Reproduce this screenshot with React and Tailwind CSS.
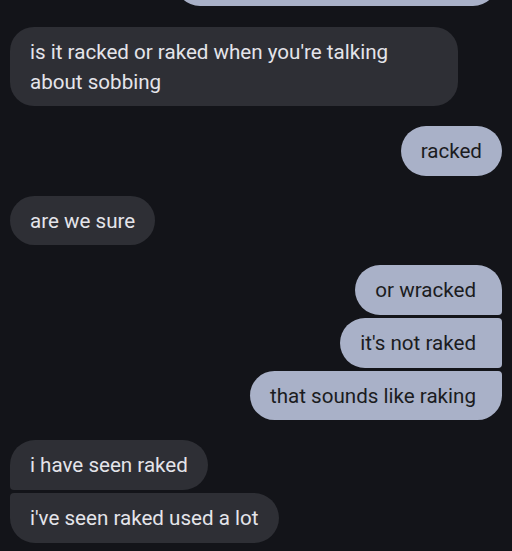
export default function App() {
  const recv = "bg-[#2e2f35] text-[#e4e4ea]";
  const sent = "bg-[#a9b1c8] text-[#1b1c21]";
  const base = "px-5 py-[10px] text-[20.6px] leading-[30px]";
  return (
    <div
      className="w-[512px] h-[551px] bg-[#131419] overflow-hidden flex flex-col"
      style={{ fontFamily: "Roboto, 'Noto Sans', sans-serif" }}
    >
      <div className="flex justify-end pr-[14px] -mt-[44px]">
        <div className={`${sent} ${base} w-[323px] h-[50px] rounded-[25px]`}></div>
      </div>
      <div className="flex flex-col px-[10px] mt-[21px]">
        <div className="flex justify-start">
          <div className={`${recv} ${base} w-[448px] rounded-[24px] pb-[9px]`}>
            is it racked or raked when you're talking
            <br />
            about sobbing
          </div>
        </div>
        <div className="flex justify-end mt-[20px]">
          <div className={`${sent} ${base} rounded-[25px]`}>racked</div>
        </div>
        <div className="flex justify-start mt-[20px]">
          <div className={`${recv} ${base} rounded-[25px] h-[49px] leading-[29px]`}>are we sure</div>
        </div>
        <div className="flex flex-col items-end mt-[20px] gap-[3px]">
          <div className={`${sent} ${base} pr-[26px] rounded-[25px] rounded-br-[4px]`}>or wracked</div>
          <div className={`${sent} ${base} pr-[26px] rounded-l-[25px] rounded-r-[4px]`}>it's not raked</div>
          <div className={`${sent} ${base} pr-[26px] rounded-[25px] rounded-tr-[4px] h-[49px] leading-[29px]`}>that sounds like raking</div>
        </div>
        <div className="flex flex-col items-start mt-[20px] gap-[3px]">
          <div className={`${recv} ${base} rounded-[25px] rounded-bl-[4px]`}>i have seen raked</div>
          <div className={`${recv} ${base} rounded-[25px] rounded-tl-[4px]`}>i've seen raked used a lot</div>
        </div>
      </div>
    </div>
  );
}
